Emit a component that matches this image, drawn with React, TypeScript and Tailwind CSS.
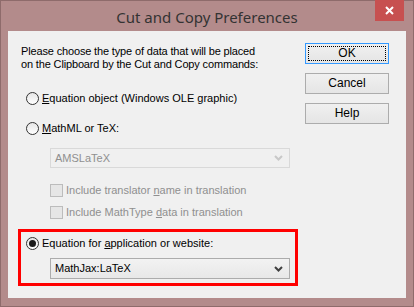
import React from "react";

const font = { fontFamily: '"Liberation Sans", Arial, sans-serif' };

function Radio({ checked }: { checked?: boolean }) {
  return (
    <span className="w-[13px] h-[13px] rounded-full border border-[#333333] bg-gradient-to-b from-[#e6e6e6] to-[#ffffff] flex items-center justify-center shrink-0">
      {checked && <span className="w-[7px] h-[7px] rounded-full bg-[#1a1a1a]" />}
    </span>
  );
}

function Check() {
  return <span className="w-[13px] h-[13px] border border-[#bcbcbc] bg-[#e6e6e6] shrink-0" />;
}

function Chevron({ color }: { color: string }) {
  return (
    <svg width="9" height="6" viewBox="0 0 9 6" className="shrink-0">
      <path d="M1 1 L4.5 4.5 L8 1" fill="none" stroke={color} strokeWidth="2" />
    </svg>
  );
}

function Btn({ label, focus }: { label: string; focus?: boolean }) {
  return (
    <div
      className={`w-[84px] h-[21px] border ${focus ? "border-[#3399ff]" : "border-[#acacac]"} bg-gradient-to-b from-[#f0f0f0] to-[#e5e5e5] p-[2px] flex`}
    >
      <div className={`flex-1 flex items-center justify-center text-[12px] text-black ${focus ? "border border-dotted border-black" : ""}`}>
        {label}
      </div>
    </div>
  );
}

export default function App() {
  return (
    <div className="w-[414px] h-[307px] bg-[#b38b8b] border border-[#8e6b6b] flex flex-col" style={font}>
      <div className="relative h-[30px] shrink-0 flex items-center justify-center">
        <span className="text-[15px] text-[#333333] mt-[2px]" style={{ fontFamily: '"Noto Sans", "Open Sans", sans-serif' }}>
          Cut and Copy Preferences
        </span>
        <div className="absolute right-[9px] top-[-1px] w-[29px] h-[21px] bg-[#c75050] flex items-center justify-center">
          <svg width="9" height="9" viewBox="0 0 9 9">
            <path d="M1 1 L8 8 M8 1 L1 8" stroke="#ffffff" strokeWidth="2" />
          </svg>
        </div>
      </div>
      <div className="mx-[7px] h-[267px] bg-[#f0f0f0] flex text-[11px] leading-[13px] text-black">
        <div className="w-[297px] flex flex-col">
          <div className="ml-[13px] mt-[14px] tracking-[-0.15px]">
            Please choose the type of data that will be placed
            <br />
            on the Clipboard by the Cut and Copy commands:
          </div>
          <div className="ml-[18px] mt-[21px] flex items-center gap-[3px]">
            <Radio />
            <span>
              <u>E</u>quation object (Windows OLE graphic)
            </span>
          </div>
          <div className="ml-[18px] mt-[17px] flex items-center gap-[3px]">
            <Radio />
            <span>
              <u>M</u>athML or TeX:
            </span>
          </div>
          <div className="ml-[42px] mt-[13px] w-[240px] h-[20px] border border-[#d9d9d9] bg-[#f0f0f0] flex items-center justify-between pl-[4px] pr-[6px] text-[#8f8f8f]">
            <span>AMSLaTeX</span>
            <Chevron color="#c8c8c8" />
          </div>
          <div className="ml-[42px] mt-[16px] flex items-center gap-[3px] text-[#8f8f8f]">
            <Check />
            <span>
              Include translator <u>n</u>ame in translation
            </span>
          </div>
          <div className="ml-[42px] mt-[9px] flex items-center gap-[3px] text-[#8f8f8f]">
            <Check />
            <span>
              Include MathType <u>d</u>ata in translation
            </span>
          </div>
          <div className="ml-[10px] mt-[10px] w-[280px] h-[57px] border-[3px] border-[#ff0000] flex flex-col">
            <div className="ml-[5px] mt-[5px] flex items-center gap-[3px]">
              <Radio checked />
              <span>
                Equation for <u>a</u>pplication or website:
              </span>
            </div>
            <div className="ml-[29px] mt-[8px] w-[240px] h-[21px] border border-[#acacac] bg-gradient-to-b from-[#f2f2f2] to-[#e8e8e8] flex items-center justify-between pl-[4px] pr-[6px]">
              <span>MathJax:LaTeX</span>
              <Chevron color="#404040" />
            </div>
          </div>
        </div>
        <div className="ml-[0px] mt-[12px] flex flex-col gap-[9px]">
          <Btn label="OK" focus />
          <Btn label="Cancel" />
          <Btn label="Help" />
        </div>
      </div>
    </div>
  );
}
